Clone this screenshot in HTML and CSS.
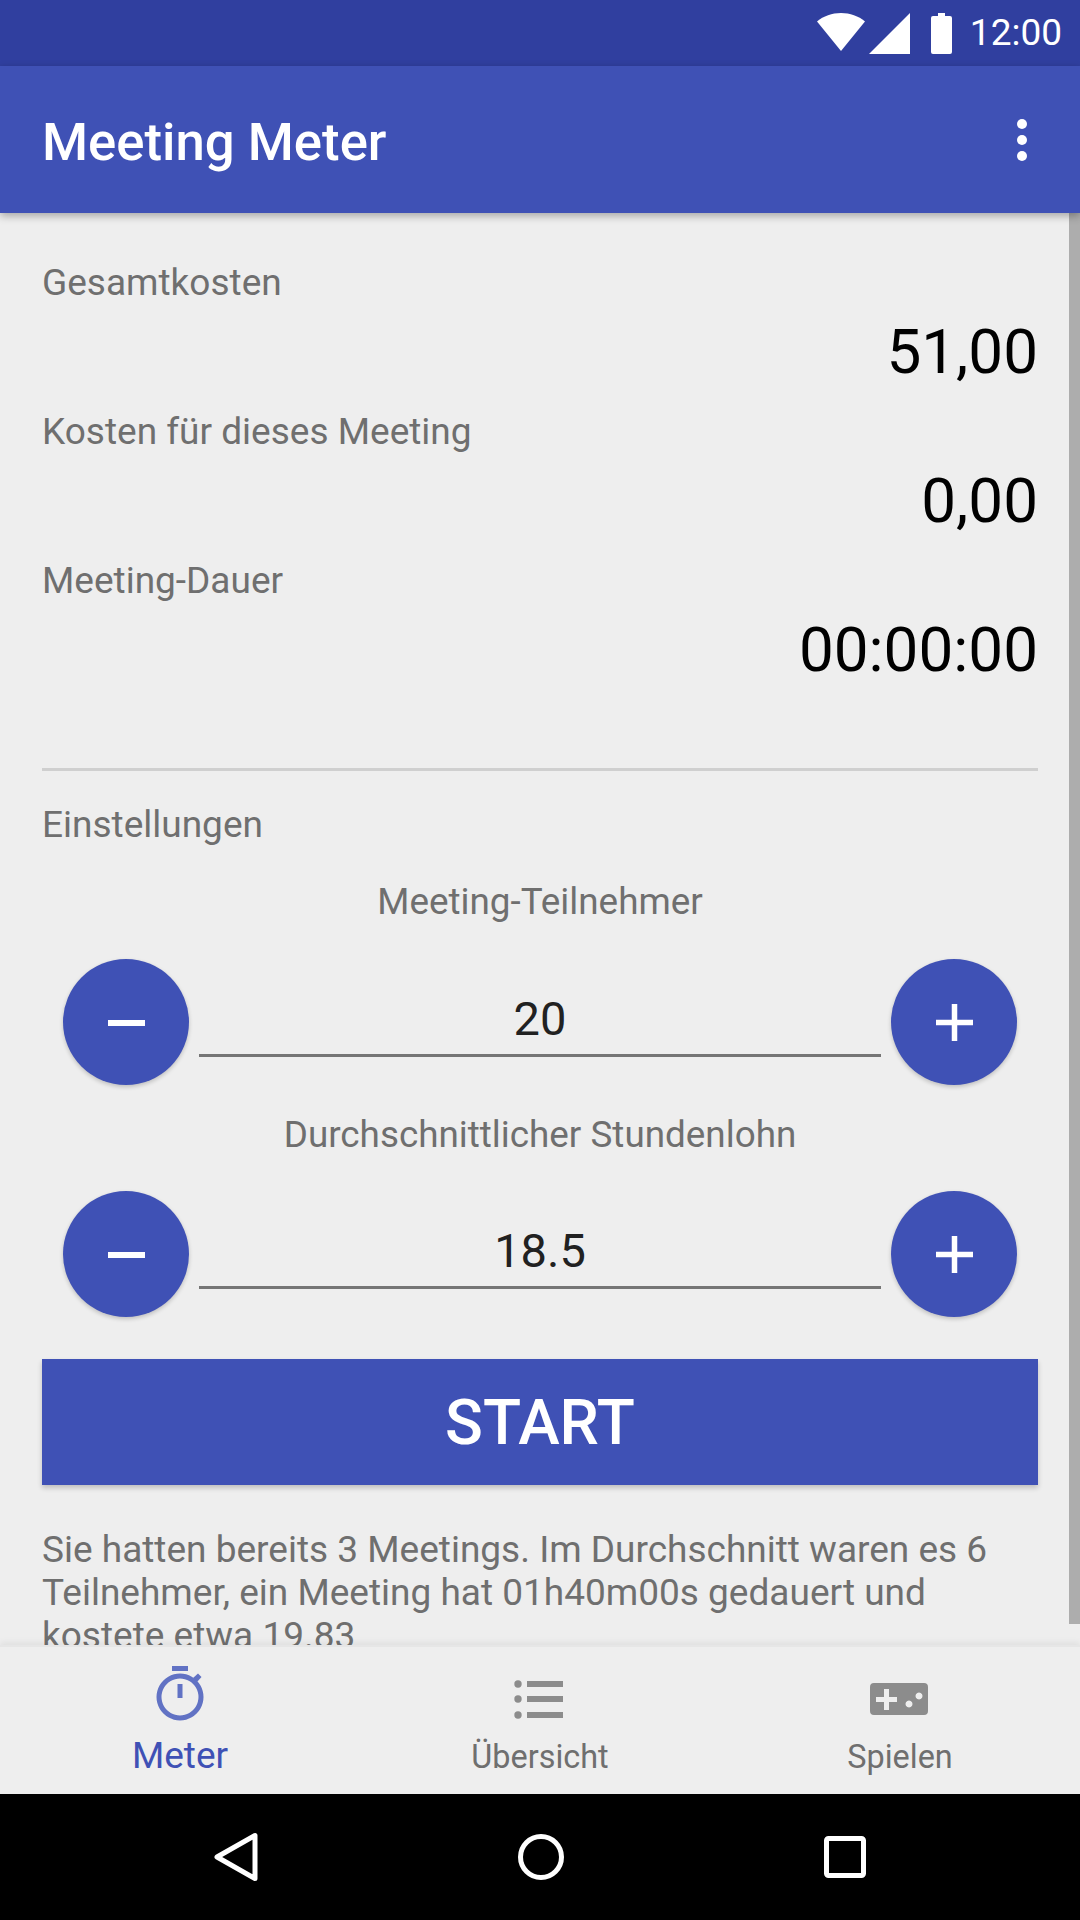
FILE: index.html
```html
<!DOCTYPE html>
<html lang="de">
<head>
<meta charset="utf-8">
<title>Meeting Meter</title>
<link rel="stylesheet" href="styles.css">
</head>
<body>
<div class="app">
  <div class="statusbar">
    <svg class="st-wifi" width="48" height="38" viewBox="0 0 48 38"><path d="M0 8.500C6.500 3 15 0 24 0s17.500 3 24 8.500L24 38z" fill="#fff"/></svg>
    <svg class="st-signal" width="41" height="41" viewBox="0 0 41 41"><path d="M41 0v41H0z" fill="#fff"/></svg>
    <svg class="st-batt" width="21" height="41" viewBox="0 0 21 41"><path d="M7 0h7v3h5a2 2 0 0 1 2 2v34a2 2 0 0 1-2 2H2a2 2 0 0 1-2-2V5a2 2 0 0 1 2-2h5z" fill="#fff"/></svg>
    <span class="st-time">12:00</span>
  </div>
  <header class="appbar">
    <h1 class="title">Meeting Meter</h1>
    <div class="dots"><i></i><i></i><i></i></div>
  </header>
  <main class="content">
    <div class="scrollbar"></div>
    <div class="inner">
      <div class="label">Gesamtkosten</div>
      <div class="value">51,00</div>
      <div class="label">Kosten für dieses Meeting</div>
      <div class="value">0,00</div>
      <div class="label">Meeting-Dauer</div>
      <div class="value">00:00:00</div>
      <hr class="divider">
      <div class="label settings">Einstellungen</div>
      <div class="label centered first">Meeting-Teilnehmer</div>
      <div class="stepper first-stepper">
        <button class="fab"><svg width="39" height="39" viewBox="0 0 39 39"><path d="M1 17h37v6H1z" fill="#fff"/></svg></button>
        <div class="field">20</div>
        <button class="fab"><svg width="39" height="39" viewBox="0 0 39 39"><path d="M1 16.750h37v5.500H1zM16.750 1h5.500v37h-5.500z" fill="#fff"/></svg></button>
      </div>
      <div class="label centered">Durchschnittlicher Stundenlohn</div>
      <div class="stepper">
        <button class="fab"><svg width="39" height="39" viewBox="0 0 39 39"><path d="M1 17h37v6H1z" fill="#fff"/></svg></button>
        <div class="field">18.5</div>
        <button class="fab"><svg width="39" height="39" viewBox="0 0 39 39"><path d="M1 16.750h37v5.500H1zM16.750 1h5.500v37h-5.500z" fill="#fff"/></svg></button>
      </div>
      <button class="start">START</button>
      <p class="summary">Sie hatten bereits 3 Meetings. Im Durchschnitt waren es 6 Teilnehmer, ein Meeting hat 01h40m00s gedauert und kostete etwa 19.83</p>
    </div>
  </main>
  <nav class="tabs">
    <div class="tab active">
      <svg width="54" height="60" viewBox="0 0 54 60"><g fill="#6172c4"><path d="M19 2h16v5H19zM24.500 20h5v14h-5z"/><path d="M40 14l5-4.500 3.500 3.500-4.500 5z"/><path fill-rule="evenodd" d="M27 9.500a23.500 23.500 0 1 0 .01 0zM27 14.500a18.500 18.500 0 1 1-.01 0z"/></g></svg>
      <span>Meter</span>
    </div>
    <div class="tab">
      <svg width="54" height="60" viewBox="0 0 54 60"><g fill="#8c8c8c"><circle cx="5" cy="20" r="3.700"/><circle cx="5" cy="35" r="3.700"/><circle cx="5" cy="51" r="3.700"/><path d="M14 17h36v6H14zM14 32h36v6H14zM14 48h36v6H14z"/></g></svg>
      <span>Übersicht</span>
    </div>
    <div class="tab">
      <svg width="60" height="60" viewBox="0 0 60 60"><path fill-rule="evenodd" fill="#8c8c8c" d="M4 19h50a4 4 0 0 1 4 4v24a4 4 0 0 1-4 4H4a4 4 0 0 1-4-4V23a4 4 0 0 1 4-4zM14 25v8H6v5h8v8h5v-8h8v-5h-8v-8zM39 36.500a3.500 3.500 0 1 0 .01 0zM49 28.500a3.500 3.500 0 1 0 .01 0z"/></svg>
      <span>Spielen</span>
    </div>
  </nav>
  <div class="navbar">
    <svg width="44" height="50" viewBox="0 0 44 50"><path d="M41 3.500v43L3 25z" fill="none" stroke="#fff" stroke-width="5" stroke-linejoin="round"/></svg>
    <svg width="46" height="46" viewBox="0 0 46 46"><circle cx="23" cy="23" r="20.500" fill="none" stroke="#fff" stroke-width="5"/></svg>
    <svg width="42" height="42" viewBox="0 0 42 42"><rect x="2.500" y="2.500" width="37" height="37" rx="2" fill="none" stroke="#fff" stroke-width="5"/></svg>
  </div>
</div>
</body>
</html>
```
FILE: styles.css
```css
* { box-sizing: border-box; }
html, body { margin: 0; padding: 0; }
body { width: 1080px; height: 1920px; overflow: hidden; font-family: Roboto, "Liberation Sans", sans-serif; background: #eeeeee; }
.app { display: flex; flex-direction: column; width: 1080px; height: 1920px; }

.statusbar { height: 66px; flex: none; background: #303f9f; display: flex; align-items: center; justify-content: flex-end; padding-right: 18px; color: #fff; }
.st-wifi { margin-right: 4px; margin-bottom: 2px; }
.st-signal { margin-right: 21px; }
.st-batt { margin-right: 18px; }
.st-time { font-size: 37px; line-height: 66px; }

.appbar { height: 147px; flex: none; background: #3f51b5; display: flex; align-items: center; justify-content: space-between; padding: 0 53px 0 42px; position: relative; z-index: 2; box-shadow: 0 3px 8px rgba(0,0,0,.3); }
.title { margin: 0; padding-top: 4px; font-size: 52.700px; font-weight: 500; color: #fff; }
.dots { display: flex; flex-direction: column; gap: 6px; }
.dots i { display: block; width: 10px; height: 10px; border-radius: 50%; background: #fff; }

.content { flex: 1; min-height: 0; position: relative; overflow: hidden; background: #eeeeee; }
.scrollbar { position: absolute; top: 0; right: 0; width: 11px; height: 1411px; background: #adadad; }
.inner { padding: 48px 42px 0; }

.label { font-size: 37px; line-height: 43px; color: #6f6f6f; }
.value { font-size: 62px; line-height: 70px; color: #000; text-align: right; margin: 13px 0 23px; }
.divider { border: 0; height: 3px; background: #cfcfcf; margin: 83px 0 32px; }
.centered { text-align: center; font-size: 36.850px; }
.first { margin-top: 34px; }
.stepper { display: flex; align-items: flex-start; justify-content: space-between; padding: 0 21px; margin: 35px 0 28px; }
.first-stepper { margin-top: 36px; }
.fab { width: 126px; height: 126px; flex: none; border: 0; padding: 0; border-radius: 50%; background: #3f51b5; display: flex; align-items: center; justify-content: center; box-shadow: 0 2px 4px rgba(0,0,0,.2); }
.field { flex: 1; margin: 0 10px; height: 98px; padding-top: 33px; text-align: center; font-size: 47px; line-height: 54px; color: #212121; border-bottom: 3px solid #757575; }
.start { display: block; width: 100%; height: 126px; border: 0; padding: 0; margin-top: 42px; background: #3f51b5; color: #fff; font: 500 62.500px Roboto, sans-serif; box-shadow: 0 3px 5px rgba(0,0,0,.2); }
.summary { margin: 43px 0 0; font-size: 37px; line-height: 43px; color: #6f6f6f; }

.tabs { height: 149px; flex: none; display: flex; background: #eeeeee; border-top: 2px solid #e6e6e6; position: relative; box-shadow: 0 -3px 6px rgba(0,0,0,.06); }
.tab { flex: 1; display: flex; flex-direction: column; align-items: center; padding-top: 17px; color: #6f6f6f; font-size: 32.400px; line-height: 44px; }
.tab svg { display: block; margin-bottom: 11px; }
.tab.active { color: #3f51b5; font-size: 37px; line-height: 42px; }

.navbar { height: 126px; flex: none; background: #000; display: flex; align-items: center; justify-content: center; gap: 260px; }
```
